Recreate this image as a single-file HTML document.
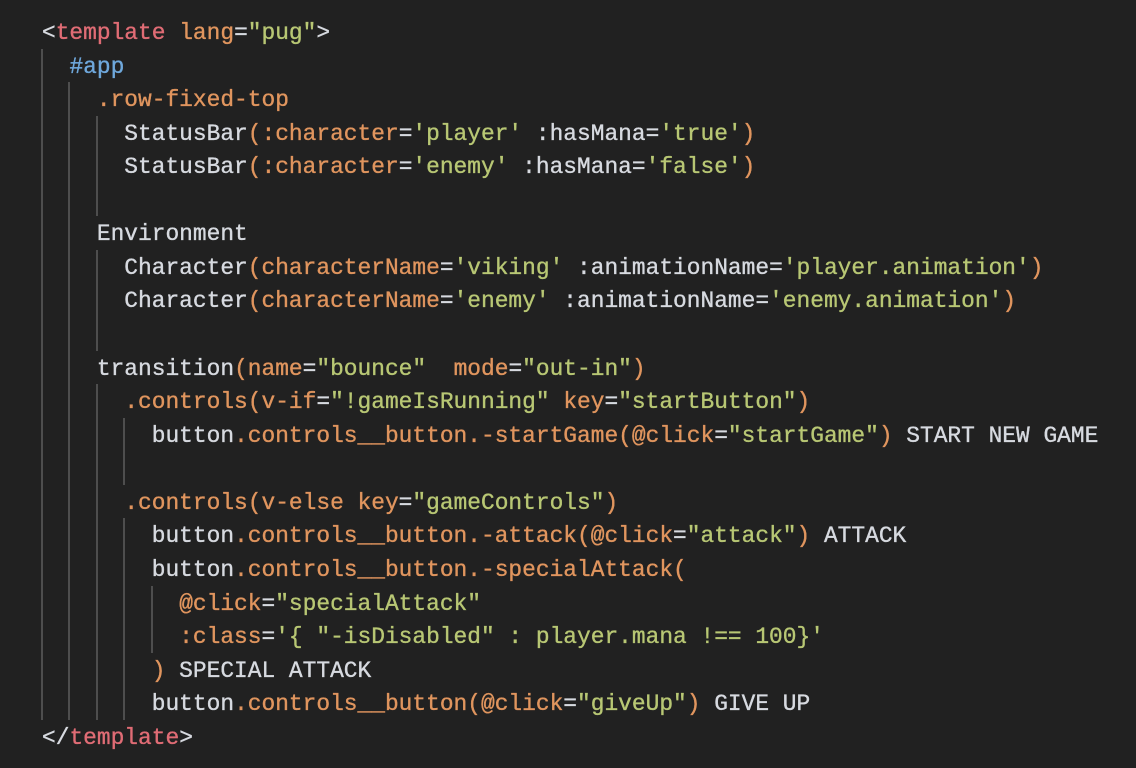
<!DOCTYPE html>
<html><head><meta charset="utf-8"><style>
html,body{margin:0;padding:0;background:#212121;width:1136px;height:768px;overflow:hidden}
.l{position:absolute;left:42px;height:34px;line-height:34px;white-space:pre;font-family:"Liberation Mono",monospace;font-size:22.86px;color:#d7dae0;-webkit-text-stroke:0.35px currentColor;margin-top:1px}
.o{color:#e0955e}.g{color:#b8c774}.r{color:#e06c75}.b{color:#6fa8dc}
.gd{position:absolute;width:2px;background:#4e4e4e}
</style></head><body>
<div class="l" style="top:15px">&lt;<span class="r">template</span> <span class="o">lang</span>=<span class="g">"pug"</span>&gt;</div>
<div class="l" style="top:49px">  <span class="b">#app</span></div>
<div class="l" style="top:82px">    <span class="o">.row-fixed-top</span></div>
<div class="l" style="top:116px">      StatusBar<span class="o">(:character</span>=<span class="g">'player'</span> :hasMana=<span class="g">'true'</span><span class="o">)</span></div>
<div class="l" style="top:149px">      StatusBar<span class="o">(:character</span>=<span class="g">'enemy'</span> :hasMana=<span class="g">'false'</span><span class="o">)</span></div>
<div class="l" style="top:216px">    Environment</div>
<div class="l" style="top:250px">      Character<span class="o">(characterName</span>=<span class="g">'viking'</span> :animationName=<span class="g">'player.animation'</span><span class="o">)</span></div>
<div class="l" style="top:283px">      Character<span class="o">(characterName</span>=<span class="g">'enemy'</span> :animationName=<span class="g">'enemy.animation'</span><span class="o">)</span></div>
<div class="l" style="top:351px">    transition<span class="o">(name</span>=<span class="g">"bounce"</span>  <span class="o">mode</span>=<span class="g">"out-in"</span><span class="o">)</span></div>
<div class="l" style="top:384px">      <span class="o">.controls(v-if</span>=<span class="g">"!gameIsRunning"</span> <span class="o">key</span>=<span class="g">"startButton"</span><span class="o">)</span></div>
<div class="l" style="top:418px">        button<span class="o">.controls__button.-startGame(@click</span>=<span class="g">"startGame"</span><span class="o">)</span> START NEW GAME</div>
<div class="l" style="top:485px">      <span class="o">.controls(v-else key</span>=<span class="g">"gameControls"</span><span class="o">)</span></div>
<div class="l" style="top:518px">        button<span class="o">.controls__button.-attack(@click</span>=<span class="g">"attack"</span><span class="o">)</span> ATTACK</div>
<div class="l" style="top:552px">        button<span class="o">.controls__button.-specialAttack(</span></div>
<div class="l" style="top:586px">          <span class="o">@click</span>=<span class="g">"specialAttack"</span></div>
<div class="l" style="top:619px">          <span class="o">:class</span>=<span class="g">'{ "-isDisabled" : player.mana !== 100}'</span></div>
<div class="l" style="top:653px">        <span class="o">)</span> SPECIAL ATTACK</div>
<div class="l" style="top:686px">        button<span class="o">.controls__button(@click</span>=<span class="g">"giveUp"</span><span class="o">)</span> GIVE UP</div>
<div class="l" style="top:720px">&lt;/<span class="r">template</span>&gt;</div>

<div class="gd" style="left:41px;top:49px;height:671px"></div>
<div class="gd" style="left:68px;top:82px;height:638px"></div>
<div class="gd" style="left:96px;top:116px;height:100px"></div>
<div class="gd" style="left:96px;top:250px;height:101px"></div>
<div class="gd" style="left:96px;top:384px;height:336px"></div>
<div class="gd" style="left:123px;top:418px;height:67px"></div>
<div class="gd" style="left:123px;top:518px;height:202px"></div>
<div class="gd" style="left:151px;top:586px;height:67px"></div>
</body></html>
